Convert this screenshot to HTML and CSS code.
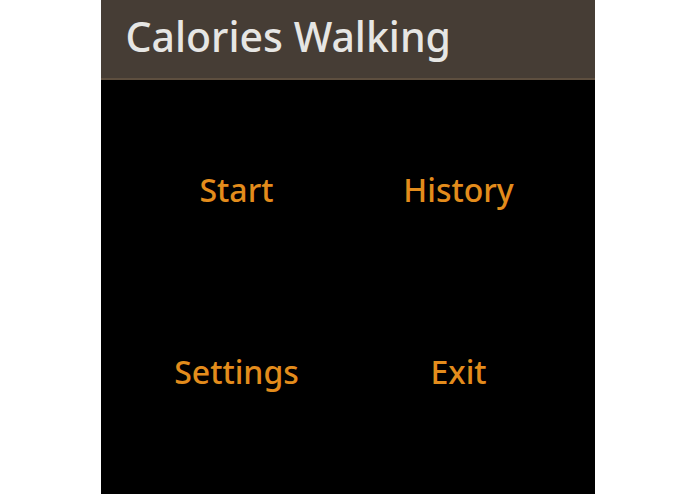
FILE: index.html
```html
<!DOCTYPE html>
<html>
<head>
    <title>Calories Walking</title>
    <link rel="stylesheet" href="styles.css">
</head>
<body>
    <div class="screen">
        <div class="header">
            <span class="title">Calories Walking</span>
        </div>

        <div class="menu">
            <div class="menu-item">Start</div>
            <div class="menu-item">History</div>
            <div class="menu-item">Settings</div>
            <div class="menu-item">Exit</div>
        </div>
    </div>
</body>
</html>
```

FILE: styles.css
```css
body {
    font-family: 'Noto Sans', 'Open Sans', sans-serif;
    background-color: #fff;
    margin: 0;
    padding: 0;
}
.screen {
    width: 494px;
    height: 494px;
    margin: 0 auto;
    background: #000;
    display: flex;
    flex-direction: column;
}
.header {
    background: #463d35;
    border-bottom: 2px solid #5e4f3f;
    padding: 12px 25px 0;
    height: 66px;
}
.title {
    color: #e6e6e4;
    font-size: 41px;
    font-weight: 500;
    line-height: 49px;
}
.menu {
    flex: 1;
    display: grid;
    grid-template-columns: 1fr 1fr;
    grid-template-rows: 182px 182px;
    padding: 18px 25px 32px;
}
.menu-item {
    display: flex;
    align-items: center;
    justify-content: center;
    color: #e38c1c;
    font-size: 32px;
    font-weight: 500;
    cursor: pointer;
}
```
